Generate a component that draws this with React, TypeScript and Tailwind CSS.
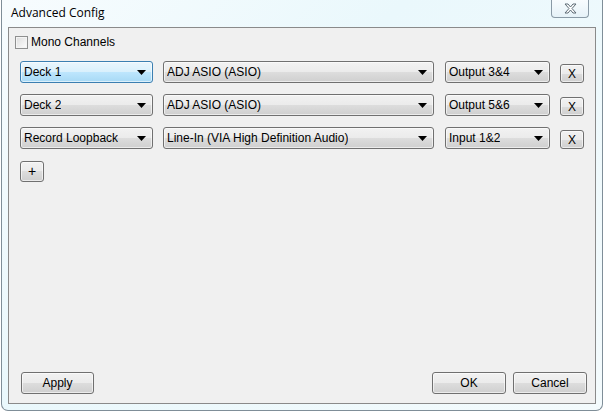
const ui = { fontFamily: '"Liberation Sans", Arial, sans-serif' }

function Arrow() {
    return (
        <svg width="9" height="5" viewBox="0 0 9 5" className="shrink-0">
            <path d="M0 0H9L4.5 5Z" fill="#000" />
        </svg>
    )
}

function Combo({ label, width, focused }: { label: string; width: string; focused?: boolean }) {
    const face = focused
        ? 'border-[#3c7fb1] bg-[linear-gradient(#eaf6fd_0%,#d9f0fc_50%,#bee6fd_50%,#a7d9f5_100%)]'
        : 'border-[#707070] bg-[linear-gradient(#f2f2f2_0%,#ebebeb_50%,#dddddd_50%,#cfcfcf_100%)]'
    return (
        <div className={`flex h-[22px] shrink-0 items-center justify-between rounded-[3px] border pl-[3px] pr-[6px] shadow-[inset_0_0_0_1px_rgba(255,255,255,0.6)] ${width} ${face}`}>
            <span className="truncate text-[12px] text-black">{label}</span>
            <Arrow />
        </div>
    )
}

function Button({ children, className }: { children: React.ReactNode; className: string }) {
    return (
        <div className={`flex shrink-0 items-center justify-center rounded-[3px] border border-[#707070] bg-[linear-gradient(#f2f2f2_0%,#ebebeb_50%,#dddddd_50%,#cfcfcf_100%)] text-[12px] text-black shadow-[inset_0_0_0_1px_rgba(255,255,255,0.6)] ${className}`}>
            {children}
        </div>
    )
}

const rows = [
    { deck: 'Deck 1', device: 'ADJ ASIO (ASIO)', port: 'Output 3&4', focused: true },
    { deck: 'Deck 2', device: 'ADJ ASIO (ASIO)', port: 'Output 5&6' },
    { deck: 'Record Loopback', device: 'Line-In (VIA High Definition Audio)', port: 'Input 1&2' },
]

export default function App() {
    return (
        <div className="h-[412px] w-[604px] overflow-hidden bg-white" style={ui}>
            <div className="ml-[1px] flex h-[411px] w-[602px] flex-col rounded-b-[7px] border border-t-0 border-[#7f8e98] bg-[linear-gradient(135deg,#f7fcfe_0%,#eaf8fc_40%,#f4fbfd_100%)]">
                <div className="flex h-[27px] shrink-0 items-start justify-between">
                    <span className="pl-[9px] pt-[4px] text-[12px] text-black" style={{ fontFamily: '"Open Sans", "Noto Sans", sans-serif' }}>
                        Advanced Config
                    </span>
                    <div className="mr-[13px] flex h-[18px] w-[38px] items-center justify-center rounded-b-[4px] border border-t-0 border-[#8a9aa6] bg-[linear-gradient(#f8fcfe,#e6f2f8)]">
                        <svg width="13" height="11" viewBox="0 0 13 11">
                            <path d="M1 1h3l2.5 3 2.5-3h3l-4 4.5 4 4.5h-3l-2.5-3-2.5 3h-3l4-4.5z" fill="#fff" stroke="#5d6b75" strokeWidth="1" strokeLinejoin="round" />
                        </svg>
                    </div>
                </div>
                <div className="mx-[6px] mb-[6px] flex flex-1 flex-col border border-[#8a8a8a] bg-[#f0f0f0]">
                    <div className="ml-[6px] mt-[5px] flex items-center gap-[3px]">
                        <div className="h-[13px] w-[13px] border border-[#8e8f8f] bg-[linear-gradient(135deg,#dcdcdc,#fdfdfd)] shadow-[inset_0_0_0_1px_#f4f4f4]" />
                        <span className="text-[12px] text-black">Mono Channels</span>
                    </div>
                    <div className="ml-[11px] mt-[10px] flex flex-col gap-[11px]">
                        {rows.map((r) => (
                            <div key={r.deck} className="flex items-center">
                                <Combo label={r.deck} width="w-[133px]" focused={r.focused} />
                                <div className="ml-[10px]">
                                    <Combo label={r.device} width="w-[271px]" />
                                </div>
                                <div className="ml-[11px]">
                                    <Combo label={r.port} width="w-[105px]" />
                                </div>
                                <Button className="ml-[10px] mt-[3px] h-[19px] w-[24px] text-[11px]">X</Button>
                            </div>
                        ))}
                    </div>
                    <Button className="ml-[11px] mt-[12px] h-[21px] w-[24px] text-[14px]">+</Button>
                    <div className="mb-[9px] mt-auto flex items-center">
                        <Button className="ml-[12px] h-[22px] w-[73px]">Apply</Button>
                        <Button className="ml-auto h-[22px] w-[74px]">OK</Button>
                        <Button className="ml-[7px] mr-[8px] h-[22px] w-[74px]">Cancel</Button>
                    </div>
                </div>
            </div>
        </div>
    )
}
